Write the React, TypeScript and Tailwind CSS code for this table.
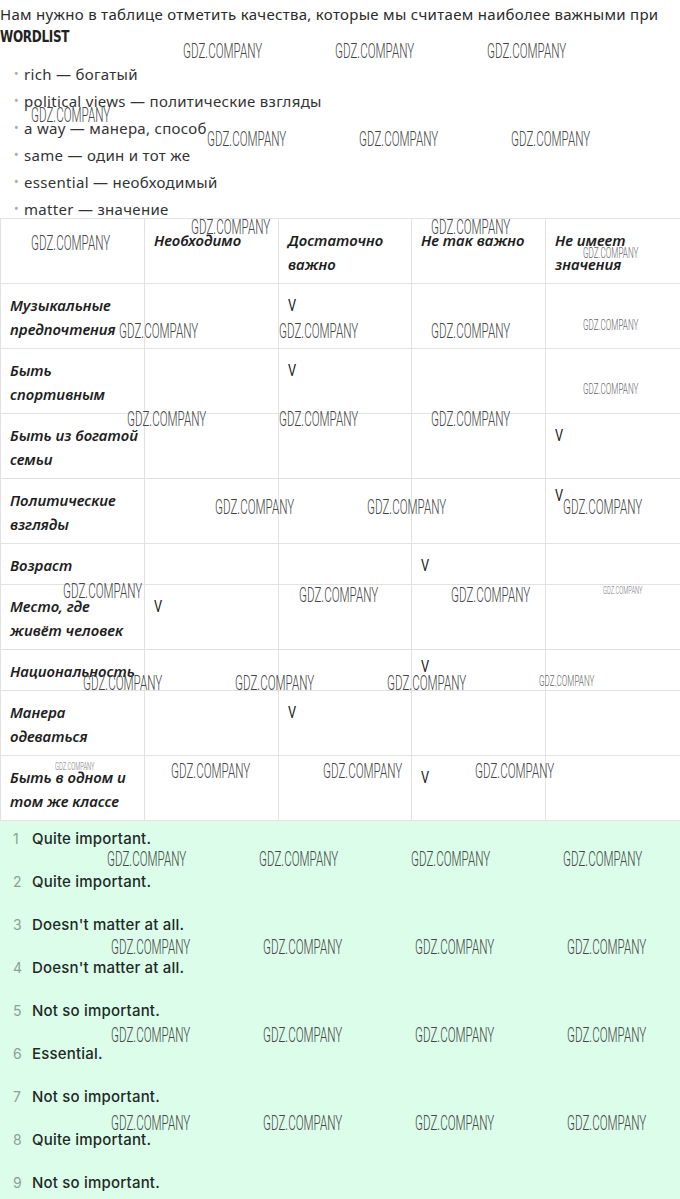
import React from "react";

type WM = { x: number; y: number; s?: "lg" | "md" | "sm" | "xs" };

const marks: WM[] = [
  { x: 183, y: 51 }, { x: 335, y: 51 }, { x: 487, y: 51 },
  { x: 31, y: 115 },
  { x: 207, y: 139 }, { x: 359, y: 139 }, { x: 511, y: 139 },
  { x: 191, y: 227 }, { x: 431, y: 227 },
  { x: 31, y: 243 },
  { x: 583, y: 253, s: "sm" },
  { x: 119, y: 331 }, { x: 279, y: 331 }, { x: 431, y: 331 }, { x: 583, y: 325, s: "sm" },
  { x: 583, y: 389, s: "sm" },
  { x: 127, y: 419 }, { x: 279, y: 419 }, { x: 431, y: 419 },
  { x: 215, y: 507 }, { x: 367, y: 507 }, { x: 563, y: 507 },
  { x: 63, y: 591 }, { x: 299, y: 595 }, { x: 451, y: 595 }, { x: 603, y: 591, s: "xs" },
  { x: 83, y: 683 }, { x: 235, y: 683 }, { x: 387, y: 683 }, { x: 539, y: 681, s: "sm" },
  { x: 55, y: 767, s: "xs" },
  { x: 171, y: 771 }, { x: 323, y: 771 }, { x: 475, y: 771 },
  { x: 107, y: 859 }, { x: 259, y: 859 }, { x: 411, y: 859 }, { x: 563, y: 859 },
  { x: 111, y: 947 }, { x: 263, y: 947 }, { x: 415, y: 947 }, { x: 567, y: 947 },
  { x: 111, y: 1035 }, { x: 263, y: 1035 }, { x: 415, y: 1035 }, { x: 567, y: 1035 },
  { x: 111, y: 1123 }, { x: 263, y: 1123 }, { x: 415, y: 1123 }, { x: 567, y: 1123 },
];

function Watermark({ x, y, s = "lg" }: WM) {
  const cls =
    s === "lg"
      ? "text-[20px] text-[#444]"
      : s === "md"
      ? "text-[16px] text-[#555]"
      : s === "sm"
      ? "text-[14px] text-[#666]"
      : "text-[10px] text-[#777]";
  const h = s === "lg" ? 10 : s === "sm" ? 7 : 5;
  return (
    <div
      className={`absolute whitespace-nowrap leading-none font-light origin-left scale-x-[0.58] pointer-events-none ${cls}`}
      style={{ left: x, top: y - h, fontFamily: "Roboto, sans-serif" }}
    >
      GDZ.COMPANY
    </div>
  );
}

const words = [
  "rich — богатый",
  "political views — политические взгляды",
  "a way — манера, способ",
  "same — один и тот же",
  "essential — необходимый",
  "matter — значение",
];

const headers = ["", "Необходимо", "Достаточно важно", "Не так важно", "Не имеет значения"];

const rows: { label: string; mark: number; up?: boolean }[] = [
  { label: "Музыкальные предпочтения", mark: 2 },
  { label: "Быть спортивным", mark: 2 },
  { label: "Быть из богатой семьи", mark: 4 },
  { label: "Политические взгляды", mark: 4, up: true },
  { label: "Возраст", mark: 3 },
  { label: "Место, где живёт человек", mark: 1 },
  { label: "Национальность", mark: 3, up: true },
  { label: "Манера одеваться", mark: 2 },
  { label: "Быть в одном и том же классе", mark: 3 },
];

const answers = [
  "Quite important.",
  "Quite important.",
  "Doesn't matter at all.",
  "Doesn't matter at all.",
  "Not so important.",
  "Essential.",
  "Not so important.",
  "Quite important.",
  "Not so important.",
];

export default function App() {
  return (
    <div className="relative w-[680px] min-h-[1199px] bg-white text-[#2b2b2b] overflow-hidden" style={{ fontFamily: '"Noto Sans", sans-serif' }}>
      <p className="text-[15px] leading-[24px] pt-[2px] whitespace-nowrap tracking-[0.3px]">
        Нам нужно в таблице отметить качества, которые мы считаем наиболее важными при
      </p>
      <div className="text-[15px] leading-[22px] font-bold text-[#222] origin-left scale-x-[0.8] tracking-tight" style={{ fontFamily: '"DejaVu Sans", sans-serif' }}>
        WORDLIST
      </div>
      <ul className="mt-[16px] flex flex-col gap-[7px] pl-[14px]">
        {words.map((w) => (
          <li key={w} className="flex items-center text-[15px] leading-[20px] text-[#333] tracking-[0.3px]">
            <span className="w-[10px] text-[#aaa] text-[12px]">•</span>
            <span>{w}</span>
          </li>
        ))}
      </ul>
      <table className="table-fixed border-collapse w-[680px] -mt-[1px]">
        <colgroup>
          <col className="w-[144px]" />
          <col className="w-[134px]" />
          <col className="w-[133px]" />
          <col className="w-[134px]" />
          <col className="w-[135px]" />
        </colgroup>
        <thead>
          <tr>
            {headers.map((h, i) => (
              <th
                key={i}
                className="border border-[#e2e2e2] align-top text-left pl-[9px] pr-[2px] pt-[9px] pb-[7px] text-[15px] leading-[24px] italic font-semibold text-[#1f1f1f]"
              >
                {h}
              </th>
            ))}
          </tr>
        </thead>
        <tbody>
          {rows.map((r, ri) => (
            <tr key={ri}>
              <td className="border border-[#e2e2e2] align-top pl-[9px] pr-[2px] pt-[9px] pb-[7px] text-[15px] leading-[24px] italic font-semibold text-[#1f1f1f]">
                {r.label}
              </td>
              {[1, 2, 3, 4].map((c) => (
                <td key={c} className="border border-[#e2e2e2] align-top pl-[9px] pt-[9px] pb-[7px] text-[15px] leading-[24px]">
                  {r.mark === c ? (
                    <span
                      className={`inline-block text-[17px] text-[#222] origin-left scale-x-[0.75] ${r.up ? "-translate-y-[5px]" : ""}`}
                      style={{ fontFamily: "Roboto, sans-serif" }}
                    >
                      V
                    </span>
                  ) : null}
                </td>
              ))}
            </tr>
          ))}
        </tbody>
      </table>
      <ol className="bg-[#dbfdea] pt-[8px] pb-[20px] flex flex-col gap-[23px]" style={{ fontFamily: "Inter, sans-serif" }}>
        {answers.map((a, i) => (
          <li key={i} className="flex items-center text-[15px] leading-[20px]">
            <span className="w-[32px] pl-[13px] text-[14px] text-[#8f9f96]">{i + 1}</span>
            <span className="font-medium text-[#1e2a26] tracking-[0.2px]">{a}</span>
          </li>
        ))}
      </ol>
      {marks.map((m, i) => (
        <Watermark key={i} {...m} />
      ))}
    </div>
  );
}
